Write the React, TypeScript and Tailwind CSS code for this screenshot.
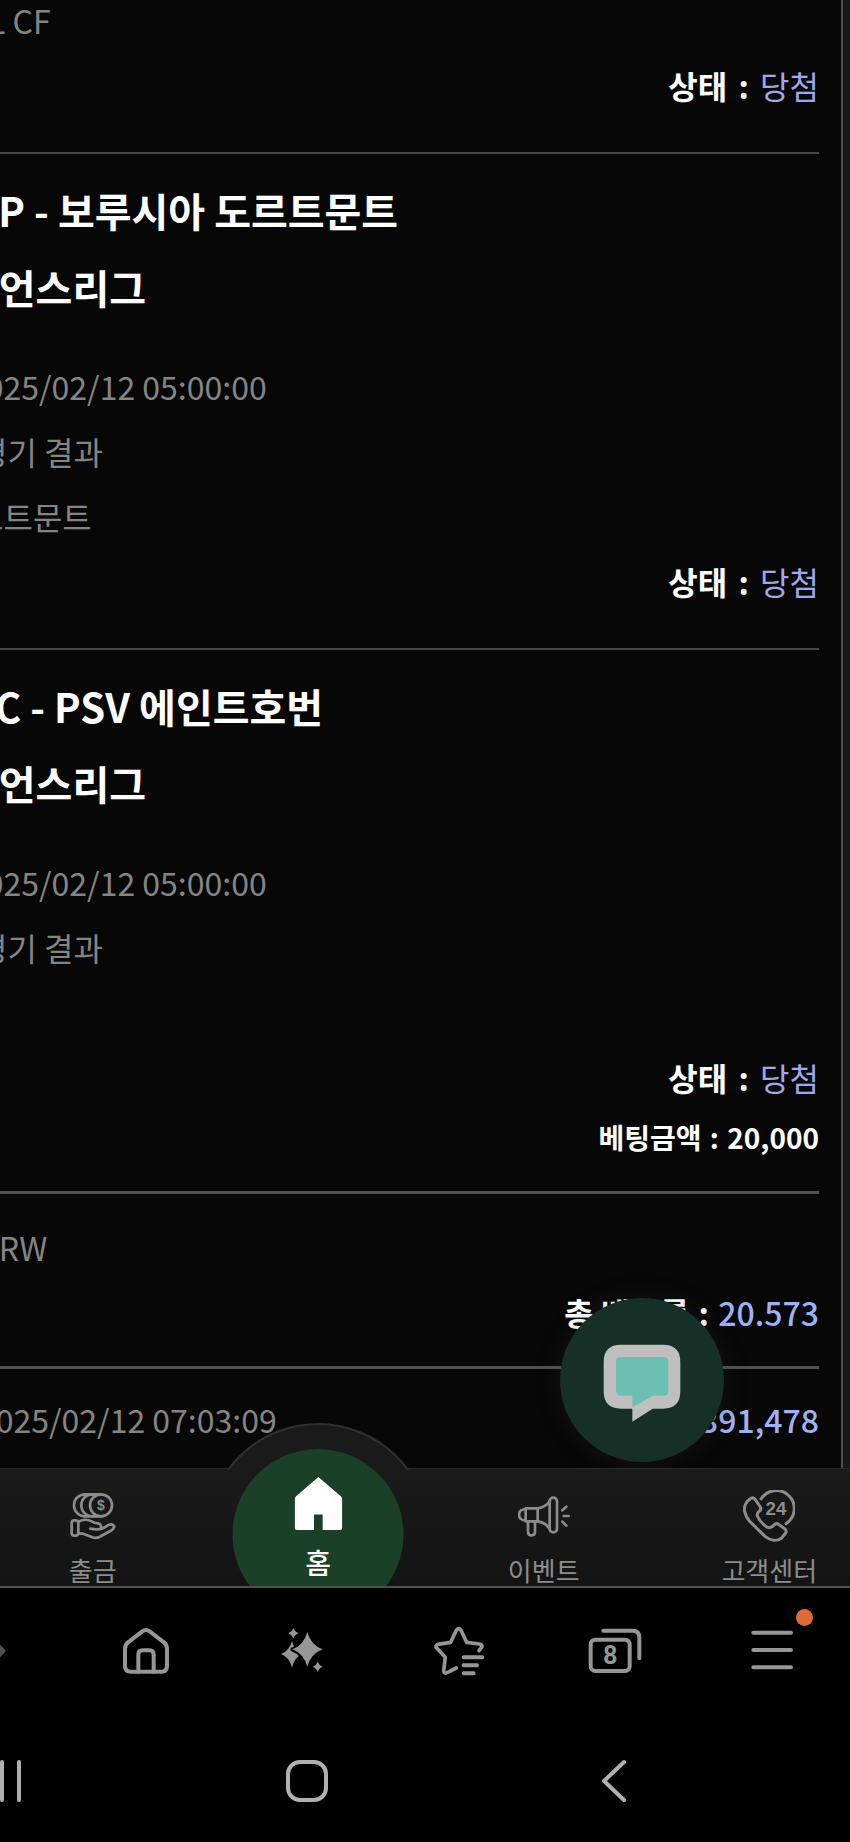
import React from 'react';
import { clsx } from 'clsx';

interface BetProps {
  teams: string;
  league: string;
  date: string;
  market: string;
  pick?: string;
}

const Status: React.FC = () => (
  <p className="text-right text-[32px] leading-[65px] font-bold text-white">
    상태 <span className="mx-1">:</span> <span className="font-normal text-[#a0a9e8]">당첨</span>
  </p>
);

const Bet: React.FC<BetProps> = ({ teams, league, date, market, pick }) => (
  <article className="border-t-2 border-[#484848] pt-[18px]">
    <h2 className="-ml-7 text-[40px] leading-[77px] font-bold text-white">{teams}</h2>
    <h3 className="-ml-[38px] text-[40px] leading-[77px] font-bold text-white">{league}</h3>
    <div className="mt-7 text-[32px] leading-[65px] text-[#848484]">
      <p className="-ml-8">{date}</p>
      <p className="-ml-[22px]">{market}</p>
      <p className="-ml-[26px] min-h-[65px]">{pick}</p>
    </div>
    <Status />
  </article>
);

const ChatButton: React.FC = () => (
  <button
    type="button"
    aria-label="채팅"
    className="absolute right-[126px] bottom-1.5 size-[164px] rounded-full bg-[#162f27] shadow-[0_0_24px_rgba(60,60,60,0.25)]">
    <svg viewBox="0 0 492 492" className="size-full">
      <path
        d="M183 140 H309 Q361 140 361 192 V280 Q361 332 309 332 H278 L217 371 V332 H183 Q131 332 131 280 V192 Q131 140 183 140 Z"
        fill="#bfbfbf"
      />
      <path
        d="M184 177 H310 Q325 177 325 192 V278 Q325 293 310 293 H280 L217 328 V293 H184 Q168 293 168 278 V192 Q168 177 184 177 Z"
        fill="#6cbfb1"
      />
    </svg>
  </button>
);

const WithdrawIcon = () => (
  <svg viewBox="200 119 156 156" className="size-[52px]" fill="none" stroke="currentColor" strokeWidth="8" strokeLinecap="round" strokeLinejoin="round">
    <circle cx="302" cy="165" r="33" />
    <path d="M284 133 A33 33 0 1 0 284 197" />
    <path d="M262 133 A33 33 0 1 0 262 197" />
    <path d="M252 132 H302 M252 198 H302" />
    <text x="302" y="180" fontSize="42" fontWeight="700" fontFamily="Liberation Sans, sans-serif" textAnchor="middle" fill="currentColor" stroke="none">
      $
    </text>
    <rect x="214" y="210" width="20" height="46" rx="8" />
    <path d="M235 214 Q254 203 274 213 Q282 218 294 219 Q305 223 301 234 Q296 240 270 235 M301 236 Q312 233 326 223 Q338 219 342 229 Q340 237 330 242 L297 260 Q287 265 276 261 L248 250 H235" />
  </svg>
);

const EventIcon = () => (
  <svg viewBox="279 119 156 156" className="size-[52px]" fill="none" stroke="currentColor" strokeWidth="8" strokeLinecap="round" strokeLinejoin="round">
    <path d="M302 174 H338 V213 H302 Z" />
    <path d="M302 176 Q282 178 282 193 Q282 209 302 211" />
    <path d="M338 174 Q362 171 374 153 M338 213 Q362 217 374 235" />
    <rect x="374" y="142" width="22" height="104" rx="11" />
    <path d="M309 213 V244 Q309 255 319 255 Q330 255 330 244 V213" />
    <path d="M412 180 L424 169 M416 197 H431 M412 214 L424 226" />
  </svg>
);

const SupportIcon = () => (
  <svg viewBox="955 120 156 156" className="size-[52px]" fill="none" stroke="currentColor" strokeWidth="9" strokeLinecap="round" strokeLinejoin="round">
    <path d="M1009 147 A54 54 0 1 1 1084 221" />
    <path d="M979 145 C964 153 957 170 960 184 C962 197 968 206 976 215 L1022 260 C1038 273 1057 274 1071 264 L1083 249 Q1087 243 1081 237 L1062 223 Q1055 218 1048 225 Q1039 237 1026 231 Q1005 215 998 198 Q996 189 1004 184 Q1011 178 1007 171 L992 149 Q987 141 979 145 Z" />
    <text x="1054" y="195" fontSize="56" fontWeight="700" fontFamily="Liberation Sans, sans-serif" textAnchor="middle" fill="currentColor" stroke="none">
      24
    </text>
  </svg>
);

const NavItem: React.FC<React.PropsWithChildren<{ label: string }>> = ({ label, children }) => (
  <a href="#" className="flex flex-col items-center pt-[21px] text-[#8c8c8c]">
    {children}
    <span className="mt-3 text-[26px] leading-8">{label}</span>
  </a>
);

const SiteNav: React.FC = () => (
  <nav className="relative border-t border-[#2c2c2c] bg-linear-to-b from-[#1a1a1b] to-[#131314]">
    <div className="-mr-8 -ml-5 grid grid-cols-4">
      <NavItem label="출금">
        <WithdrawIcon />
      </NavItem>
      <div className="relative">
        {/* the bar bulges up round the active item */}
        <div className="absolute -top-[46px] left-1/2 h-[47px] w-[224px] -translate-x-1/2 overflow-hidden">
          <div className="size-[224px] rounded-full border-2 border-[#303030] bg-[#1a1a1b]" />
        </div>
        <a
          href="#"
          className="absolute -top-5 left-1/2 flex size-[171px] -translate-x-1/2 flex-col items-center rounded-full bg-[#1a4027] pt-7 text-white">
          <svg viewBox="883 80 143 160" className="h-[53px] w-12" fill="currentColor">
            <path d="M954 80 L1022 138 Q1026 141 1026 146 V234 Q1026 240 1020 240 H967 V193 H941 V240 H889 Q883 240 883 234 V146 Q883 141 887 138 Z" />
          </svg>
          <span className="mt-3 text-[28px] leading-10 font-medium">홈</span>
        </a>
      </div>
      <NavItem label="이벤트">
        <EventIcon />
      </NavItem>
      <NavItem label="고객센터">
        <SupportIcon />
      </NavItem>
    </div>
  </nav>
);

interface BarButtonProps {
  label: string;
  viewBox: string;
  dim?: boolean;
  badge?: boolean;
}

const BarButton: React.FC<React.PropsWithChildren<BarButtonProps>> = ({ label, viewBox, dim, badge, children }) => (
  <button type="button" aria-label={label} className={clsx('relative justify-self-center', dim ? 'text-[#505050]' : 'text-[#969696]')}>
    <svg viewBox={viewBox} className="size-[54px]" fill="none" stroke="currentColor" strokeWidth="12" strokeLinecap="round" strokeLinejoin="round">
      {children}
    </svg>
    {badge && <span className="absolute -top-[15px] -right-[14px] size-[17px] rounded-full bg-[#dc6b37]" />}
  </button>
);

const BrowserBar: React.FC = () => (
  <div className="relative border-t-2 border-[#4f4f4f] bg-black pt-9 pb-[42px]">
    <div className="-ml-[89px] grid grid-cols-6">
      <BarButton label="앞으로" viewBox="0 0 162 162" dim>
        <path d="M90 47 L124 81 L90 115" />
      </BarButton>
      <BarButton label="홈페이지" viewBox="357 522 162 162">
        <path d="M375 597 Q375 584 384 577 L427 544 Q438 536 449 544 L492 577 Q501 584 501 597 V648 Q501 665 484 665 H392 Q375 665 375 648 Z" />
        <path d="M415 665 V614 Q415 601 428 601 H448 Q461 601 461 614 V665" />
      </BarButton>
      <BarButton label="AI" viewBox="822 522 162 162">
        <g fill="currentColor" stroke="none">
          <path d="M873 573 Q880 602 904 612 Q880 622 873 653 Q866 622 840 612 Q866 602 873 573 Z" />
          <path d="M919 546 Q930 586 965 598 Q930 611 919 650 Q908 611 874 598 Q908 586 919 546 Z" stroke="#000" strokeWidth="12" paintOrder="stroke" />
          <path d="M877 535 Q881 546 892 550 Q881 554 877 565 Q873 554 862 550 Q873 546 877 535 Z" />
          <path d="M950 635 Q954 646 965 650 Q954 654 950 666 Q946 654 935 650 Q946 646 950 635 Z" />
        </g>
      </BarButton>
      <BarButton label="북마크" viewBox="18 522 162 162">
        <path d="M159 602 L168 590 Q169 584 160 582 L122 577 L105 541 Q98 531 91 541 L74 577 L35 583 Q26 587 32 594 L58 622 L53 662 Q54 672 63 668 L91 654" strokeWidth="11" />
        <path d="M113 622 H169 M113 646 H153 M113 670 H143" />
      </BarButton>
      <BarButton label="탭" viewBox="489 522 162 162">
        <rect x="497" y="569" width="117" height="94" rx="14" />
        <path d="M535 542 H623 Q643 542 643 562 V625" />
        <text x="556" y="643" fontSize="76" fontWeight="700" fontFamily="Roboto, sans-serif" textAnchor="middle" fill="currentColor" stroke="none">
          8
        </text>
      </BarButton>
      <BarButton label="메뉴" viewBox="958 522 162 162" badge>
        <path d="M983 548 H1096 M983 600 H1096 M983 652 H1096" />
      </BarButton>
    </div>
  </div>
);

const SystemBar: React.FC = () => (
  <div className="relative bg-black py-[38px]">
    <div className="mr-[82px] -ml-[154px] grid grid-cols-3 text-[#b0b0b0]">
      <button type="button" aria-label="최근 앱" className="justify-self-center">
        <svg viewBox="0 0 46 46" className="size-[46px]" fill="none" stroke="currentColor" strokeWidth="4" strokeLinecap="round">
          <path d="M8 4 V42 M25 4 V42 M42 4 V42" />
        </svg>
      </button>
      <button type="button" aria-label="홈 화면" className="justify-self-center">
        <svg viewBox="0 0 46 46" className="size-[46px]" fill="none" stroke="currentColor" strokeWidth="4">
          <rect x="4" y="4" width="38" height="38" rx="12" />
        </svg>
      </button>
      <button type="button" aria-label="뒤로" className="justify-self-center">
        <svg viewBox="0 0 46 46" className="size-[46px]" fill="none" stroke="currentColor" strokeWidth="4" strokeLinecap="round" strokeLinejoin="round">
          <path d="M33 4 L13 23 L33 42" />
        </svg>
      </button>
    </div>
  </div>
);

export default function App() {
  return (
    <div className="overflow-hidden bg-black font-['Noto_Sans_CJK_KR',sans-serif] whitespace-nowrap">
      <main className="relative flex bg-[#18181a]">
        <div className="mr-[7px] min-w-0 flex-1 border-r-2 border-[#4c4c4c] bg-[#070707] pr-[22px]">
          <section className="-mt-3 pb-[34px]">
            <p className="-ml-3 text-[32px] leading-[65px] text-[#848484]">L CF</p>
            <Status />
          </section>
          <div className="space-y-[34px]">
            <Bet teams="CP - 보루시아 도르트문트" league="피언스리그" date="2025/02/12 05:00:00" market="경기 결과" pick="르트문트" />
            <Bet teams="FC - PSV 에인트호번" league="피언스리그" date="2025/02/12 05:00:00" market="경기 결과" />
          </div>
          <p className="pb-[27px] text-right text-[28px] leading-[54px] font-bold text-white">
            베팅금액 <span className="mx-0.5">:</span> 20,000
          </p>
          <section className="border-t-3 border-[#525252] py-[21px] text-[32px] leading-[65px]">
            <p className="-ml-[22px] text-[#848484]">KRW</p>
            <p className="text-right font-bold text-white">
              총 배당률 <span className="mx-0.5">:</span> <span className="font-medium text-[#a0b0f4]">20.573</span>
            </p>
          </section>
          <section className="flex justify-between border-t-3 border-[#525252] pt-[18px] pb-4 text-[32px] leading-[65px]">
            <p className="-ml-[22px] text-[#848484]">2025/02/12 07:03:09</p>
            <p className="font-medium text-[#a0b0f4]">391,478</p>
          </section>
        </div>
        <ChatButton />
      </main>
      <SiteNav />
      <BrowserBar />
      <SystemBar />
    </div>
  );
}
